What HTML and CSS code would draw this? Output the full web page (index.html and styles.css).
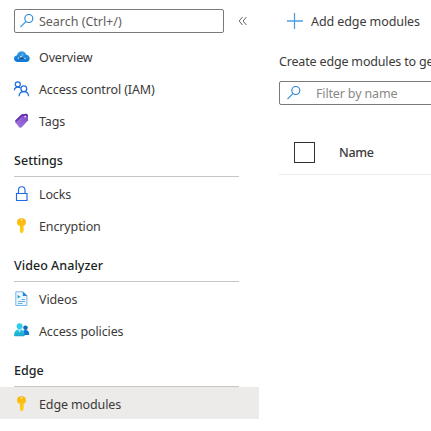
FILE: index.html
```html
<!DOCTYPE html>
<html lang="en">
<head>
<meta charset="utf-8">
<title>Edge modules</title>
<link rel="stylesheet" href="styles.css">
</head>
<body>
<svg class="defs" width="0" height="0" aria-hidden="true">
  <defs>
    <linearGradient id="cloud" x1="0" y1="0" x2="0" y2="1"><stop offset="0" stop-color="#3a9fe8"/><stop offset="1" stop-color="#0a74d4"/></linearGradient>
    <linearGradient id="tag" x1="1" y1="0" x2="0" y2="1"><stop offset="0" stop-color="#7a4bc8"/><stop offset="1" stop-color="#a678dc"/></linearGradient>
    <linearGradient id="gold" x1="0" y1="0" x2="0" y2="1"><stop offset="0" stop-color="#fbb40a"/><stop offset="1" stop-color="#ffd21f"/></linearGradient>
    <linearGradient id="person" x1="0" y1="0" x2="0" y2="1"><stop offset="0" stop-color="#2ccbe8"/><stop offset="1" stop-color="#1ba5c8"/></linearGradient>
    <symbol id="key" viewBox="0 0 16 16"><path fill="url(#gold)" d="M7.500 .2C10.400.2 12 1.800 12 4.200c0 1.900-1 3.200-2.600 3.900v1.200l.6.8-.6.900.6.9-.6.900v1.100l-1.900 1.700L5.900 14V8.100C4 7.400 3 6.100 3 4.200 3 1.800 4.600.2 7.500.2z"/><circle cx="7.500" cy="2.100" r=".9" fill="#fff0c0"/></symbol>
    <symbol id="search" viewBox="0 0 16 16"><circle cx="9.800" cy="5.500" r="4" fill="none" stroke="#2583d3" stroke-width="1.100"/><path d="M7 8.500 1.500 14" stroke="#4b9fe0" stroke-width="1.150"/></symbol>
  </defs>
</svg>
<div class="app">
  <nav class="menu">
    <div class="menu-top">
      <div class="search"><svg class="icon"><use href="#search"/></svg><span>Search (Ctrl+/)</span></div>
      <svg class="collapse" viewBox="0 0 10 10"><path d="M4.500 1 1.200 5l3.300 4M8.400 1 5.100 5l3.300 4" fill="none" stroke="#666" stroke-width="1"/></svg>
    </div>
    <ul class="general">
      <li><svg class="icon" viewBox="0 0 16 16"><path fill="url(#cloud)" d="M4 13C1.500 13 0 11.600 0 9.600 0 7.800 1.200 6.600 3 6.300 3.400 3.800 5.200 2.200 7.700 2.200c2.300 0 3.900 1.300 4.600 3.600 2.100.2 3.400 1.600 3.400 3.600 0 2.100-1.400 3.600-3.500 3.600z"/><path stroke="#8fd0f8" stroke-width=".5" d="M4.500 9.200 7 7.700l4 1.800M7 7.700l1.800-2"/><g fill="#c4e6fb"><circle cx="4.500" cy="9.200" r=".7"/><circle cx="7" cy="7.700" r=".9"/><circle cx="11" cy="9.400" r=".7"/><circle cx="8.800" cy="5.800" r=".5"/></g></svg><span>Overview</span></li>
      <li><svg class="icon" viewBox="0 0 16 16"><g fill="none" stroke="#1f6be0" stroke-width="1.250"><circle cx="3.800" cy="3.300" r="2.500"/><path d="M.3 9.400c.2-2 1.400-3.400 3.500-3.400 1.200 0 2 .3 2.700 1"/><circle cx="9.800" cy="7.700" r="2.900"/><path d="M5 15.200c.2-2.900 2-4.600 4.800-4.600s4.600 1.700 4.800 4.600"/></g></svg><span>Access control (IAM)</span></li>
      <li><svg class="icon" viewBox="0 0 16 16"><path fill="url(#tag)" d="M1.300 7.500 7.500 1.600 12.400.8 13.900 2l.2 5.300-6.600 7.300-2 .2L1.200 9.200z"/><path fill="#6430b5" d="M1.300 7.500 7.500 1.600 12.400.8 13.900 2l.1 1.800-2.400-.9-3.600.5L1.900 9z"/><circle cx="11.200" cy="3.600" r=".9" fill="#f3eaff"/></svg><span>Tags</span></li>
    </ul>
    <h2><span>Settings</span></h2>
    <ul>
      <li><svg class="icon" viewBox="0 0 16 16"><g fill="none" stroke="#1f6be0" stroke-width="1.150"><path d="M2.500 7.500h10.500v7H2.500z"/><path d="M4.500 7.500V4a3.250 3.250 0 0 1 6.500 0v3.500"/></g></svg><span>Locks</span></li>
      <li><svg class="icon"><use href="#key"/></svg><span>Encryption</span></li>
    </ul>
    <h2><span>Video Analyzer</span></h2>
    <ul>
      <li><svg class="icon" viewBox="0 0 16 16"><path fill="#edf7ff" stroke="#76b6ec" d="M1.800.8h7.200l3.900 3.900v9.800H1.800z"/><path fill="#2b83d6" d="M8.800.5V5h4.600z"/><path fill="#18a5c4" d="m3.600 4 3 1.800-3 1.800z"/><path stroke="#70aee6" stroke-width="1.200" d="M7.500 8.500h3.700M4 10.500h7M4 12.500h4.500"/></svg><span>Videos</span></li>
      <li><svg class="icon" viewBox="0 0 16 16"><circle cx="11.500" cy="4.700" r="2.300" fill="#1068b8"/><path fill="#1474cb" d="M8 12c0-3 1.200-5 3.600-5 2.300 0 3.600 1.700 3.700 4.200 0 .5-.3.800-.8.800z"/><circle cx="5.600" cy="3.200" r="3" fill="#32cce8"/><path fill="url(#person)" d="M.1 12.300C.2 8.500 1.900 6.500 5.400 6.500s5.100 2 5.300 5.800c0 .6-.4 1-1 1H1.100c-.6 0-1-.4-1-1z"/><path fill="#a5ebf6" d="M4 6.500h3.200L5.600 9.500z"/></svg><span>Access policies</span></li>
    </ul>
    <h2><span>Edge</span></h2>
    <ul>
      <li class="selected"><svg class="icon"><use href="#key"/></svg><span>Edge modules</span></li>
    </ul>
  </nav>
  <main>
    <div class="toolbar"><svg class="plus" viewBox="0 0 16 16"><path d="M7.500 0v16M0 8h16" stroke="#4da0e4" stroke-width="1.300"/></svg><span>Add edge modules</span></div>
    <p><span>Create edge modules to ge</span></p>
    <div class="filter"><svg class="icon"><use href="#search"/></svg><span>Filter by name</span></div>
    <div class="table-head"><i class="checkbox"></i><span>Name</span></div>
  </main>
</div>
</body>
</html>
```
FILE: styles.css
```css
* { box-sizing: border-box; }
html, body { margin: 0; height: 431px; overflow: hidden; background: #fff; }
body { font: 12.5px/18px "Noto Sans", "Open Sans", sans-serif; color: #3b3a39; letter-spacing: -0.12px; }
.defs { position: absolute; }
.app { display: flex; width: 431px; height: 431px; overflow: hidden; }
span { white-space: nowrap; }
.icon { width: 16px; height: 16px; flex: none; }
.menu { width: 259px; flex: none; }
.menu-top { display: flex; align-items: center; padding: 9px 0 0 14px; height: 33px; margin-bottom: 8px; }
.search { display: flex; align-items: center; width: 210px; height: 24px; border: 1px solid #7b7a79; border-radius: 2px; padding-left: 4px; color: #605e5c; letter-spacing: -0.02px; }
.search span { margin-left: 4px; padding-top: 2px; }
.collapse { width: 10px; height: 10px; margin-left: 14px; }
ul { list-style: none; margin: 0; padding: 0; }
li { display: flex; align-items: center; height: 32px; padding: 2px 0 0 14px; }
li span { margin-left: 9px; padding-top: 2px; }
.general { height: 95px; }
.general li { padding-top: 0; }
.selected { background: #edebe9; }
h2 { display: flex; align-items: center; height: 41px; margin: 0 20px 0 14px; padding-top: 9px; border-bottom: 1px solid #c8c6c4; font-size: 12.5px; font-weight: 500; letter-spacing: 0.04px; color: #201f1e; }
main { flex: none; width: 172px; padding-left: 20px; overflow: hidden; }
.toolbar { display: flex; align-items: center; height: 41px; padding-left: 8px; }
.toolbar span { margin-left: 8px; padding-top: 2px; letter-spacing: -0.08px; }
.plus { width: 16px; height: 16px; }
p { margin: 12px 0 0; height: 28px; letter-spacing: -0.17px; }
.filter { display: flex; align-items: center; width: 220px; height: 24px; border: 1px solid #7b7a79; border-radius: 2px; padding-left: 6px; color: #8a8886; }
.filter span { margin-left: 14px; padding-top: 2px; letter-spacing: -0.15px; }
.table-head { display: flex; align-items: center; height: 44px; margin-top: 26px; padding-left: 15px; border-bottom: 1px solid #edebe9; font-weight: 500; }
.checkbox { width: 21px; height: 21px; border: 1px solid #323130; }
.table-head span { margin-left: 24px; letter-spacing: -0.3px; }
```
